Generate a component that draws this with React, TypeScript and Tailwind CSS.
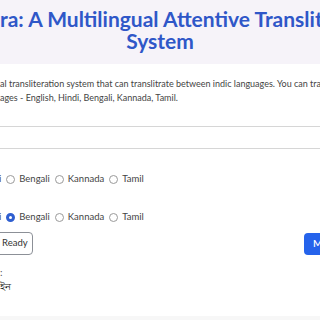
import React from 'react'

const Radio = ({ label, checked = false }: { label: string; checked?: boolean }) => (
  <label className="flex items-center gap-[4px]">
    <span
      className={
        checked
          ? 'w-[9px] h-[9px] rounded-full border-[3px] border-[#2f5fd0] bg-white'
          : 'w-[9px] h-[9px] rounded-full border border-[#9a9a9a] bg-white'
      }
    />
    <span>{label}</span>
  </label>
)

const LangRow = ({ selected }: { selected: string }) => (
  <div className="flex items-center gap-[5px] text-[9.5px] text-[#444] h-[14px]">
    <span className="-ml-[1px]">i</span>
    {['Bengali', 'Kannada', 'Tamil'].map((l) => (
      <Radio key={l} label={l} checked={l === selected} />
    ))}
  </div>
)

export default function App() {
  return (
    <div className="w-[320px] h-[320px] overflow-hidden bg-white flex flex-col" style={{ fontFamily: 'Lato, "Open Sans", sans-serif' }}>
      <header className="h-[64px] shrink-0 bg-[#f6f3f9] flex flex-col items-center pt-[8px]">
        <h1 className="self-start whitespace-nowrap text-[21px] leading-[22px] font-bold text-[#2f57c8]">
          ra: A Multilingual Attentive Transliteration
        </h1>
        <h1 className="whitespace-nowrap text-[21px] leading-[22px] font-bold text-[#2f57c8]">System</h1>
      </header>

      <main className="flex flex-col">
        <p className="mt-[13px] text-[9px] leading-[14px] text-[#444] whitespace-nowrap">
          al transliteration system that can translitrate between indic languages. You can transliterate
          <br />
          ages - English, Hindi, Bengali, Kannada, Tamil.
        </p>

        <div className="mt-[21px] h-[23px] border-y border-[#d6d6d6]" />

        <div className="mt-[23px]">
          <LangRow selected="" />
        </div>
        <div className="mt-[24px]">
          <LangRow selected="Bengali" />
        </div>

        <div className="mt-[8px] flex items-center justify-between">
          <button className="-ml-[14px] h-[23px] pr-[4px] pl-[15px] rounded-[4px] border border-[#8c9097] text-[9.5px] text-[#333] bg-white">
            Ready
          </button>
          <button className="-mr-[30px] h-[22px] w-[46px] pl-[9px] text-left rounded-[4px] bg-[#2563eb] text-white text-[10px] font-semibold">
            M
          </button>
        </div>

        <div className="mt-[10px] text-[10px] leading-[14px] text-[#555]">
          <div>:</div>
          <div className="text-[#222]">ইন</div>
        </div>
      </main>

      <div className="flex-1" />
      <footer className="h-[4px] shrink-0 bg-[#f7f7f7]" />
    </div>
  )
}
